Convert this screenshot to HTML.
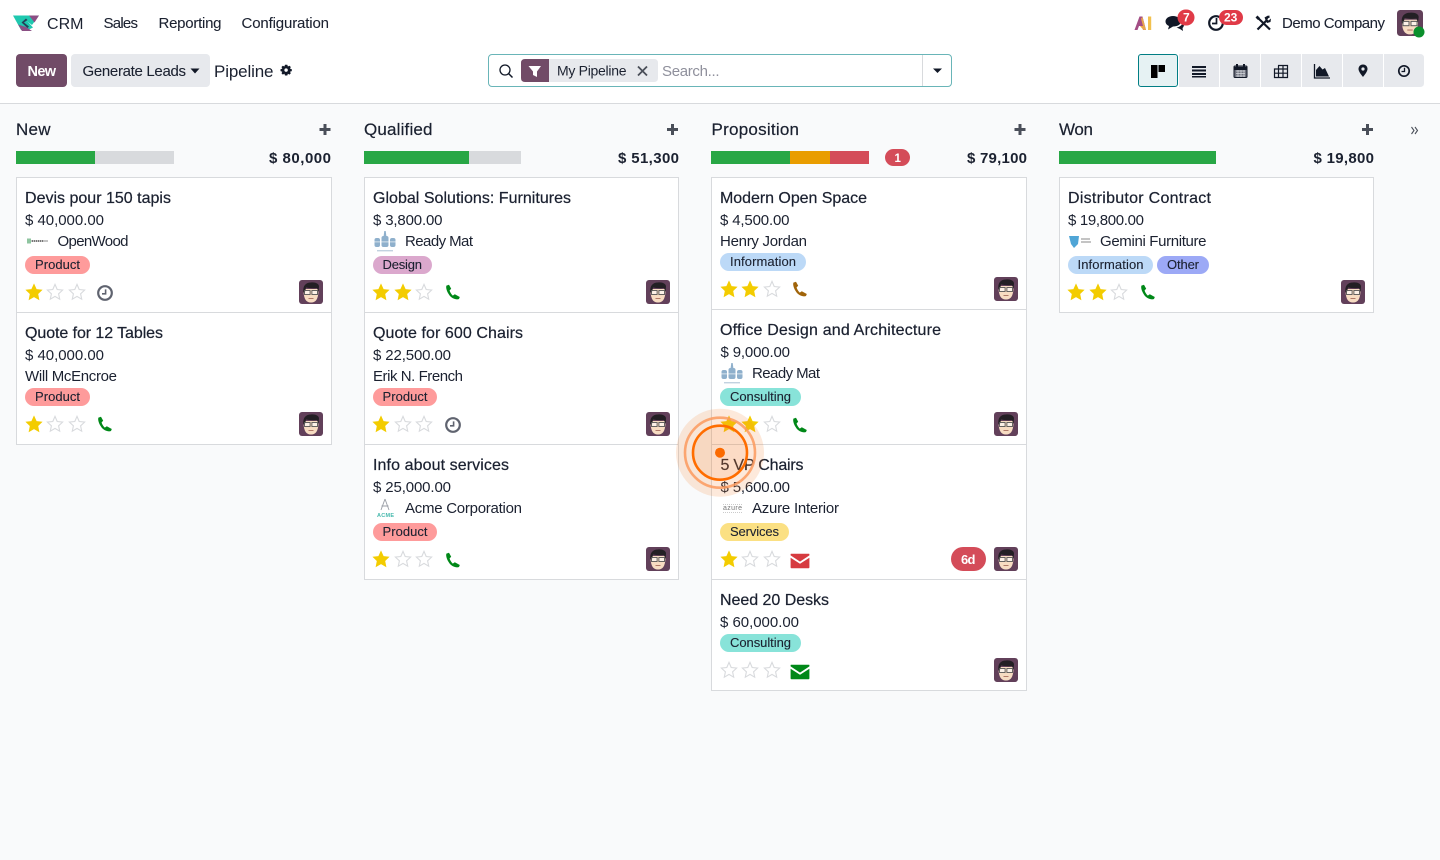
<!DOCTYPE html>
<html lang="en"><head><meta charset="utf-8"><title>Pipeline - CRM</title>
<style>
html,body{margin:0;padding:0;background:#f9fafb;width:1440px;height:860px;overflow:hidden}
svg{display:block}
text{font-family:"Liberation Sans",sans-serif;fill:#1b2130;font-size:15px}
.n{font-size:15px;stroke:#1b2130;stroke-width:.08px}
.h{font-size:17px;stroke:#1b2130;stroke-width:.2px}
.c{font-size:16px;stroke:#1b2130;stroke-width:.22px}
.a{font-size:15px;font-weight:700}
.tg{font-size:13px;stroke:#1b2130;stroke-width:.1px}
.w{fill:#fff;font-weight:700}
.card{fill:#fff;stroke:#d8dadd;stroke-width:1}
</style></head><body>
<svg width="1440" height="860" viewBox="0 0 1440 860" xmlns="http://www.w3.org/2000/svg">
<defs>
<symbol id="star" viewBox="-9 -9 18 18" overflow="visible"><path d="M0-8.6 2.6-2.9 8.6-2.2 4.2 2 5.4 8.2 0 5.1-5.4 8.2-4.2 2-8.6-2.2-2.6-2.9Z" fill="#f3cc00"/></symbol>
<symbol id="estar" viewBox="-9 -9 18 18" overflow="visible"><path d="M0-7.6 2.2-2.5 7.6-1.9 3.6 1.8 4.7 7.2 0 4.4-4.7 7.2-3.6 1.8-7.6-1.9-2.2-2.5Z" fill="#fff" stroke="#d8dadd" stroke-width="1.1"/></symbol>
<symbol id="ph" viewBox="-8 -8 16 16" overflow="visible"><path d="M-6.6-6.4-4-7.2-1.8-3.2-3.4-1.6C-3 .4-1 3-.2 3.6L1.8 2.2 6.8 5 6 7C3.8 8-1.6 7-4.4 2-6.6-1.6-7.2-4.6-6.6-6.4Z" fill="currentColor"/></symbol>
<symbol id="clk" viewBox="-9 -9 18 18" overflow="visible"><circle r="6.8" fill="none" stroke="currentColor" stroke-width="2.200"/><path d="M.6-3.6V.8H-3" fill="none" stroke="currentColor" stroke-width="1.6"/></symbol>
<symbol id="env" viewBox="-10 -8 20 16" overflow="visible"><path d="M-9-7.2H9Q9.4-7.2 9.4-6.6V-5.6L0 .6-9.4-5.6V-6.6Q-9.4-7.2-9-7.2ZM-9.4-3.2 0 2.8 9.4-3.2V6.4Q9.4 7.2 8.6 7.2H-8.6Q-9.4 7.2-9.4 6.4Z" fill="currentColor"/></symbol>
<symbol id="av" viewBox="0 0 24 24"><rect width="24" height="24" rx="3" fill="#62405a"/><path d="M4.500 9C4.500 19 7 22.500 12 22.500S19.500 19 19.500 9Z" fill="#f7dcc2"/><path d="M4.500 12.500C3.500 6 6.500 2.500 12 2.500 16 2 20 3.500 20 6.500L19.500 12 18 8C14 8.500 9.500 8 7 7.500L6 12.500Z" fill="#231f24"/><rect x="5.500" y="10.500" width="5.600" height="4" fill="#fff" fill-opacity=".6" stroke="#555" stroke-width=".9"/><rect x="12.900" y="10.500" width="5.600" height="4" fill="#fff" fill-opacity=".6" stroke="#555" stroke-width=".9"/><path d="M9.500 18.500H14.500" stroke="#b07a68" stroke-width="1"/></symbol>
<symbol id="rm" viewBox="0 0 22 22"><g fill="#8fb0cc"><rect x="0.500" y="7" width="5.500" height="9" rx="2"/><rect x="16" y="7" width="5.500" height="9" rx="2"/><rect x="7.500" y="5" width="7" height="11" rx="2"/><path d="M10.300 0H11.700L12.500 6H9.500Z"/></g><rect x="0" y="10.500" width="22" height=".8" fill="#fff" fill-opacity=".8"/><rect x="3" y="19" width="16" height="1.400" fill="#c2d2e0"/></symbol>
</defs>

<rect width="1440" height="103" fill="#fff"/>
<rect y="103" width="1440" height="1" fill="#d8dadd"/>

<!-- logo -->
<path d="M13 15.500H20.500L29 23 33 27.500 26 31 21 30Z" fill="#1fc8af"/>
<path d="M20 15.500H39L32 25 26 20.500 23.500 22Z" fill="#1fc8af"/>
<path d="M29 15.500H39L34.500 22.500Z" fill="#8b4f84"/>
<path d="M18 24.500 22 31H32L26 27Z" fill="#8b4f84"/>
<path d="M21.500 22.500 26 18.500 27.500 20 24 22.500 29 26.500 27.500 28Z" fill="#25405a"/>
<text x="47" y="29" style="font-size:16px" textLength="36.500">CRM</text>
<text x="103.500" y="28" class="n" textLength="34.500">Sales</text>
<text x="158.500" y="28" class="n" textLength="63">Reporting</text>
<text x="241.500" y="28" class="n" textLength="87.500">Configuration</text>

<!-- systray -->
<path d="M1134.500 30 1139.500 16.500H1142.500L1146 30H1143L1142 26H1139L1137.500 30Z" fill="#a34d85"/>
<path d="M1140 26H1143L1141 18.500 1142.500 17 1146 30H1143.500Z" fill="#e9a64b"/>
<rect x="1148" y="16.500" width="3.200" height="13.500" fill="#f2c14e"/>
<path d="M1173 16C1177.500 16 1181 18.500 1181 21.500S1177.500 26.500 1173 26.500L1168 29.500 1169 26C1167 25.200 1165.500 23.500 1165.500 21.500 1165.500 18.500 1168.500 16 1173 16Z" fill="#111827"/>
<path d="M1183 21C1183.500 24 1180 27 1176.500 27.500L1180 29 1183 31 1182.500 28C1184.500 26.500 1184.500 23 1183 21Z" fill="#111827"/>
<rect x="1177.500" y="9.500" width="17" height="16" rx="8" fill="#e03a47"/>
<text x="1183" y="21.500" class="w" style="font-size:12px">7</text>
<circle cx="1216" cy="23" r="6.800" fill="none" stroke="#111827" stroke-width="2.200"/>
<path d="M1216.500 18V23.500H1212" fill="none" stroke="#111827" stroke-width="1.700"/>
<rect x="1219" y="10" width="24" height="15" rx="7.500" fill="#e03a47"/>
<text x="1224" y="21.500" class="w" style="font-size:12px">23</text>
<path d="M1257 17 1270 29.500M1269.500 16.500C1267 17 1266 19 1266.500 20.500L1257.500 29.500" fill="none" stroke="#111827" stroke-width="2.200"/>
<path d="M1255.500 17.500 1257.500 15.500 1260 18 1258 20ZM1264.500 17.500 1268 15.500 1266.500 19 1268.500 20.500 1271 18.500 1270.500 22 1267 23Z" fill="#111827"/>
<text x="1282" y="28" class="n" textLength="103">Demo Company</text>
<use href="#av" x="1397" y="10" width="26" height="26"/>
<circle cx="1419" cy="32" r="5.500" fill="#0a8f2c"/>

<!-- control panel -->
<rect x="16" y="54" width="51" height="33" rx="4" fill="#714b67"/>
<text x="27.500" y="76" class="w" style="font-size:14.500px" textLength="28.500">New</text>
<rect x="71" y="54" width="139" height="33" rx="4" fill="#e7e9ed"/>
<text x="82.500" y="76" class="n" textLength="103.500">Generate Leads</text>
<path d="M190.500 68.500H199.500L195 73.500Z" fill="#111827"/>
<text x="214" y="77" style="font-size:17px" textLength="59.500">Pipeline</text>
<path d="M285 64.800H287.300L287.900 66.500 289.500 65.700 290.800 67 290 68.600 291.800 69.200V71.100L290 71.700 290.800 73.300 289.500 74.600 287.900 73.800 287.300 75.500H285L284.400 73.800 282.800 74.600 281.500 73.300 282.300 71.700 280.500 71.100V69.200L282.300 68.600 281.500 67 282.800 65.700 284.400 66.500Z" fill="#111827"/>
<circle cx="286.100" cy="70.100" r="1.700" fill="#fff"/>

<!-- search -->
<rect x="488.500" y="54.500" width="463" height="32" rx="3.500" fill="#fff" stroke="#69b5b8"/>
<circle cx="505" cy="70" r="5" fill="none" stroke="#111827" stroke-width="1.300"/>
<path d="M508.500 73.500 512.500 77.500" stroke="#111827" stroke-width="1.500"/>
<path d="M525 59H549V82H525Q521 82 521 78V63Q521 59 525 59Z" fill="#714b67"/>
<path d="M549 59H654Q658 59 658 63V78Q658 82 654 82H549Z" fill="#e7e9ed"/>
<path d="M528.500 66H541L537 71.500V77L533 75V71.500Z" fill="#fff"/>
<text x="557" y="75.500" style="font-size:14px" textLength="69.500">My Pipeline</text>
<path d="M638 66.500 647 75.500M647 66.500 638 75.500" stroke="#4a4f59" stroke-width="1.800"/>
<text x="662" y="76" style="fill:#8f909c" textLength="57.500">Search...</text>
<rect x="922" y="55" width="1" height="31" fill="#d8dadd"/>
<path d="M933 68.500H942L937.500 73Z" fill="#111827"/>

<!-- view switcher -->
<path d="M1179 54H1420Q1424 54 1424 58V83Q1424 87 1420 87H1179Z" fill="#e7e9ed"/>
<rect x="1138.500" y="54.500" width="39" height="32" rx="2.500" fill="#e6f2f3" stroke="#017e84"/>
<g fill="#fff"><rect x="1219" y="54" width="1" height="33"/><rect x="1260" y="54" width="1" height="33"/><rect x="1301" y="54" width="1" height="33"/><rect x="1342" y="54" width="1" height="33"/><rect x="1383" y="54" width="1" height="33"/></g>
<path d="M1151 65H1157.500V78H1151ZM1158.500 65H1165V72H1158.500Z" fill="#000"/>
<path d="M1192 66H1206V68H1192ZM1192 69.500H1206V71.500H1192ZM1192 73H1206V75H1192ZM1192 76H1206V77.500H1192Z" fill="#111827"/>
<rect x="1234" y="66" width="13" height="11.500" rx="1" fill="#6f727e" stroke="#111827" stroke-width="1"/>
<path d="M1234 68.500H1247" stroke="#111827" stroke-width="3"/><path d="M1237 64V67M1244 64V67" stroke="#111827" stroke-width="2"/>
<path d="M1236 71H1245M1236 73.500H1245M1236 76H1245M1238 70V77M1241 70V77M1244 70V77" stroke="#d8dbe0" stroke-width=".7"/>
<path d="M1278 65.500H1287.500V77.500H1274.500V69H1287.500M1274.500 73.200H1287.500M1278.500 65.500V77.500M1283 65.500V77.500" fill="none" stroke="#111827" stroke-width="1.200"/>
<path d="M1314.500 64V78H1330" fill="none" stroke="#111827" stroke-width="1.300"/>
<path d="M1316 76.500V70L1319.500 66 1322.500 69.500 1325 68 1329 76.500Z" fill="#111827"/>
<path d="M1363 64.500C1360 64.500 1358.500 66.700 1358.500 69 1358.500 71.500 1361.500 75 1363 77 1364.500 75 1367.500 71.500 1367.500 69 1367.500 66.700 1366 64.500 1363 64.500Z" fill="#111827"/>
<circle cx="1363" cy="69" r="1.600" fill="#e7e9ed"/>
<circle cx="1404" cy="71" r="5.200" fill="none" stroke="#111827" stroke-width="1.700"/>
<path d="M1404.500 67.800V71.500H1401.500" fill="none" stroke="#111827" stroke-width="1.300"/>

<!-- column headers -->
<text x="16" y="135" class="h" textLength="34.500">New</text>
<text x="364" y="135" class="h" textLength="68.500">Qualified</text>
<text x="711.500" y="135" class="h" textLength="87.500">Proposition</text>
<text x="1059" y="135" class="h" textLength="34">Won</text>
<g fill="#4a4f59">
<path d="M323.500 124H326.500V128H330.500V131H326.500V135H323.500V131H319.500V128H323.500Z"/>
<path d="M671 124H674V128H678V131H674V135H671V131H667V128H671Z"/>
<path d="M1018.500 124H1021.500V128H1025.500V131H1021.500V135H1018.500V131H1014.500V128H1018.500Z"/>
<path d="M1366 124H1369V128H1373V131H1369V135H1366V131H1362V128H1366Z"/>
</g>
<path d="M1411.500 127 1414 130.500 1411.500 134M1415 127 1417.500 130.500 1415 134" fill="none" stroke="#4a4f59" stroke-width="1.100"/>

<rect x="16" y="151" width="158" height="13" fill="#d8dadd"/><rect x="16" y="151" width="79" height="13" fill="#28a745"/>
<rect x="364" y="151" width="157" height="13" fill="#d8dadd"/><rect x="364" y="151" width="105" height="13" fill="#28a745"/>
<rect x="711" y="151" width="79" height="13" fill="#28a745"/><rect x="790" y="151" width="40" height="13" fill="#e99d00"/><rect x="830" y="151" width="39" height="13" fill="#d44c59"/>
<rect x="1059" y="151" width="157" height="13" fill="#28a745"/>
<rect x="885" y="149" width="25" height="17" rx="8.500" fill="#d44c59"/>
<text x="894.500" y="162" class="w" style="font-size:11.500px">1</text>
<text x="269" y="163" class="a" textLength="62">$ 80,000</text>
<text x="618" y="163" class="a" textLength="61">$ 51,300</text>
<text x="967" y="163" class="a" textLength="60">$ 79,100</text>
<text x="1313.500" y="163" class="a" textLength="60.500">$ 19,800</text>

<!-- New column -->
<rect class="card" x="16.500" y="177.500" width="315" height="135"/>
<text x="25" y="203" class="c" textLength="146">Devis pour 150 tapis</text>
<text x="25" y="225" textLength="79">$ 40,000.00</text>
<path d="M27 241H48" stroke="#888" stroke-width="1"/><rect x="27" y="238.500" width="4" height="5" fill="#8fc5a0"/><path d="M32 241H43" stroke="#777" stroke-width="2" stroke-dasharray="1 1"/>
<text x="57.500" y="246" textLength="71">OpenWood</text>
<rect x="25" y="256" width="65" height="18" rx="9" fill="#fe9b9b"/>
<text x="35" y="269" class="tg" textLength="45">Product</text>
<use href="#star" x="25" y="283" width="18" height="18"/><use href="#estar" x="46" y="283" width="18" height="18"/><use href="#estar" x="68" y="283" width="18" height="18"/>
<use href="#clk" x="96" y="284" width="18" height="18" style="color:#5f636f"/>
<use href="#av" x="299" y="280" width="24" height="24"/>

<rect class="card" x="16.500" y="312.500" width="315" height="132"/>
<text x="25" y="338" class="c" textLength="138">Quote for 12 Tables</text>
<text x="25" y="360" textLength="79">$ 40,000.00</text>
<text x="25" y="381" textLength="92">Will McEncroe</text>
<rect x="25" y="388" width="65" height="18" rx="9" fill="#fe9b9b"/>
<text x="35" y="401" class="tg" textLength="45">Product</text>
<use href="#star" x="25" y="415" width="18" height="18"/><use href="#estar" x="46" y="415" width="18" height="18"/><use href="#estar" x="68" y="415" width="18" height="18"/>
<use href="#ph" x="97" y="416" width="16" height="16" style="color:#008818"/>
<use href="#av" x="299" y="412" width="24" height="24"/>

<!-- Qualified column -->
<rect class="card" x="364.500" y="177.500" width="314" height="135"/>
<text x="373" y="203" class="c" textLength="198">Global Solutions: Furnitures</text>
<text x="373" y="225" textLength="69.500">$ 3,800.00</text>
<use href="#rm" x="374" y="231" width="22" height="22"/>
<text x="405" y="246" textLength="68">Ready Mat</text>
<rect x="373" y="256" width="59" height="18" rx="9" fill="#dba8cd"/>
<text x="382.500" y="269" class="tg" textLength="39.500">Design</text>
<use href="#star" x="372" y="283" width="18" height="18"/><use href="#star" x="394" y="283" width="18" height="18"/><use href="#estar" x="415" y="283" width="18" height="18"/>
<use href="#ph" x="445" y="284" width="16" height="16" style="color:#008818"/>
<use href="#av" x="646" y="280" width="24" height="24"/>

<rect class="card" x="364.500" y="312.500" width="314" height="132"/>
<text x="373" y="338" class="c" textLength="150">Quote for 600 Chairs</text>
<text x="373" y="360" textLength="78">$ 22,500.00</text>
<text x="373" y="381" textLength="90">Erik N. French</text>
<rect x="373" y="388" width="64" height="18" rx="9" fill="#fe9b9b"/>
<text x="382.500" y="401" class="tg" textLength="45">Product</text>
<use href="#star" x="372" y="415" width="18" height="18"/><use href="#estar" x="394" y="415" width="18" height="18"/><use href="#estar" x="415" y="415" width="18" height="18"/>
<use href="#clk" x="444" y="416" width="18" height="18" style="color:#5f636f"/>
<use href="#av" x="646" y="412" width="24" height="24"/>

<rect class="card" x="364.500" y="444.500" width="314" height="135"/>
<text x="373" y="470" class="c" textLength="136">Info about services</text>
<text x="373" y="492" textLength="78">$ 25,000.00</text>
<path d="M385 499 381 510M385 499 389 510M381.500 506H388.500" fill="none" stroke="#9a9ea6" stroke-width=".9"/>
<text x="377" y="517" style="font-size:5.500px;fill:#45b8ac;font-weight:700" textLength="17">ACME</text>
<text x="405" y="513" textLength="117">Acme Corporation</text>
<rect x="373" y="523" width="64" height="18" rx="9" fill="#fe9b9b"/>
<text x="382.500" y="536" class="tg" textLength="45">Product</text>
<use href="#star" x="372" y="550" width="18" height="18"/><use href="#estar" x="394" y="550" width="18" height="18"/><use href="#estar" x="415" y="550" width="18" height="18"/>
<use href="#ph" x="445" y="552" width="16" height="16" style="color:#008818"/>
<use href="#av" x="646" y="547" width="24" height="24"/>

<!-- Proposition column -->
<rect class="card" x="711.500" y="177.500" width="315" height="132"/>
<text x="720" y="203" class="c" textLength="147">Modern Open Space</text>
<text x="720" y="225" textLength="69.500">$ 4,500.00</text>
<text x="720" y="246" textLength="87">Henry Jordan</text>
<rect x="720" y="253" width="86" height="18" rx="9" fill="#bcd9f7"/>
<text x="730" y="266" class="tg" textLength="66">Information</text>
<use href="#star" x="720" y="280" width="18" height="18"/><use href="#star" x="741" y="280" width="18" height="18"/><use href="#estar" x="763" y="280" width="18" height="18"/>
<use href="#ph" x="792" y="281" width="16" height="16" style="color:#a0640a"/>
<use href="#av" x="994" y="277" width="24" height="24"/>

<rect class="card" x="711.500" y="309.500" width="315" height="135"/>
<text x="720" y="335" class="c" textLength="221">Office Design and Architecture</text>
<text x="720.500" y="357" textLength="69.500">$ 9,000.00</text>
<use href="#rm" x="721" y="363" width="22" height="22"/>
<text x="752" y="378" textLength="68">Ready Mat</text>
<rect x="720" y="388" width="81" height="18" rx="9" fill="#88e3d9"/>
<text x="730" y="401" class="tg" textLength="61">Consulting</text>
<use href="#star" x="720" y="415" width="18" height="18"/><use href="#star" x="741" y="415" width="18" height="18"/><use href="#estar" x="763" y="415" width="18" height="18"/>
<use href="#ph" x="792" y="417" width="16" height="16" style="color:#008818"/>
<use href="#av" x="994" y="412" width="24" height="24"/>

<rect class="card" x="711.500" y="444.500" width="315" height="135"/>
<text x="720.500" y="470" class="c" textLength="83">5 VP Chairs</text>
<text x="720.500" y="492" textLength="69.500">$ 5,600.00</text>
<text x="723" y="510" style="font-size:7px;fill:#777" textLength="19">azure</text>
<path d="M723 504.500H742M723 512.500H742" stroke="#bbb" stroke-width=".7" stroke-dasharray="1 1"/>
<text x="752" y="513" textLength="87">Azure Interior</text>
<rect x="720" y="523" width="69" height="18" rx="9" fill="#fbe083"/>
<text x="730" y="536" class="tg" textLength="49">Services</text>
<use href="#star" x="720" y="550" width="18" height="18"/><use href="#estar" x="741" y="550" width="18" height="18"/><use href="#estar" x="763" y="550" width="18" height="18"/>
<use href="#env" x="790" y="553" width="20" height="16" style="color:#d63b40"/>
<rect x="951" y="547" width="35" height="24" rx="12" fill="#d44c59"/>
<text x="961" y="564" class="w" style="font-size:13px" textLength="14.500">6d</text>
<use href="#av" x="994" y="547" width="24" height="24"/>

<rect class="card" x="711.500" y="579.500" width="315" height="111"/>
<text x="720" y="605" class="c" textLength="109">Need 20 Desks</text>
<text x="720" y="627" textLength="79">$ 60,000.00</text>
<rect x="720" y="634" width="81" height="18" rx="9" fill="#88e3d9"/>
<text x="730" y="647" class="tg" textLength="61">Consulting</text>
<use href="#estar" x="720" y="661" width="18" height="18"/><use href="#estar" x="741" y="661" width="18" height="18"/><use href="#estar" x="763" y="661" width="18" height="18"/>
<use href="#env" x="790" y="664" width="20" height="16" style="color:#008818"/>
<use href="#av" x="994" y="658" width="24" height="24"/>

<!-- Won column -->
<rect class="card" x="1059.500" y="177.500" width="314" height="135"/>
<text x="1068" y="203" class="c" textLength="143">Distributor Contract</text>
<text x="1068" y="225" textLength="76">$ 19,800.00</text>
<path d="M1069 236H1079L1078 244 1074 248 1071 244Z" fill="#4fa5d6"/><path d="M1081 239H1090M1081 242H1091" stroke="#888" stroke-width="1"/>
<text x="1100" y="246" textLength="106.500">Gemini Furniture</text>
<rect x="1068" y="256" width="85" height="18" rx="9" fill="#bcd9f7"/>
<text x="1077.500" y="269" class="tg" textLength="66">Information</text>
<rect x="1157" y="256" width="52" height="18" rx="9" fill="#9ca9f6"/>
<text x="1167" y="269" class="tg" textLength="32">Other</text>
<use href="#star" x="1067" y="283" width="18" height="18"/><use href="#star" x="1089" y="283" width="18" height="18"/><use href="#estar" x="1110" y="283" width="18" height="18"/>
<use href="#ph" x="1140" y="284" width="16" height="16" style="color:#008818"/>
<use href="#av" x="1341" y="280" width="24" height="24"/>

<!-- cursor highlight -->
<circle cx="720" cy="452.700" r="44" fill="#f47a2a" fill-opacity=".17"/>
<circle cx="720" cy="452.700" r="35" fill="none" stroke="#fb9a5e" stroke-opacity=".85" stroke-width="2.600"/>
<circle cx="720" cy="452.700" r="27" fill="#f47a2a" fill-opacity=".12" stroke="#ff6d00" stroke-width="2.600"/>
<circle cx="720" cy="452.700" r="5" fill="#fb6a00"/>
</svg>
</body></html>
